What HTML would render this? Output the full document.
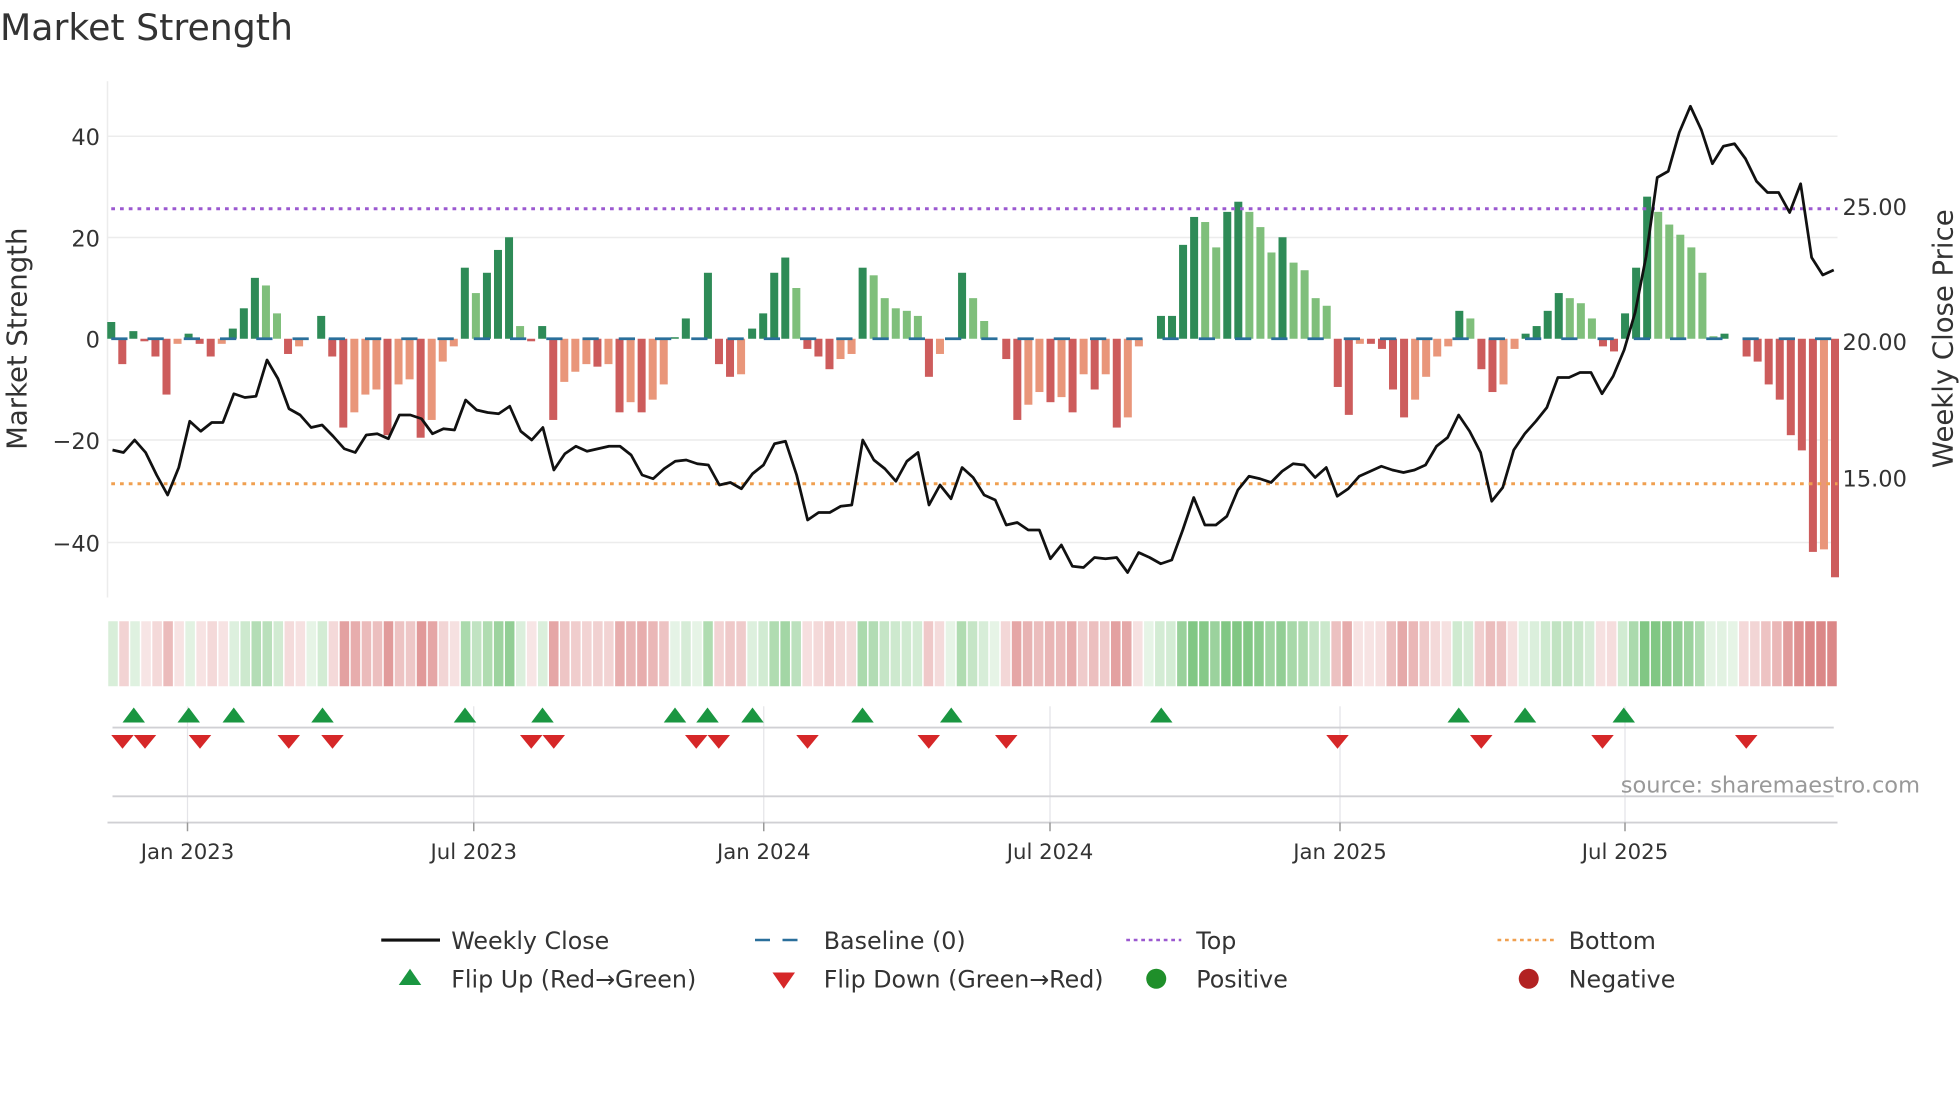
<!DOCTYPE html>
<html><head><meta charset="utf-8"><style>
html,body{margin:0;padding:0;background:#fff;}
svg{display:block;}
text{font-family:"DejaVu Sans","Liberation Sans",sans-serif;fill:#333;}
</style></head><body>
<svg id="s" width="1960" height="1102" viewBox="0 0 1568 881.6" xmlns="http://www.w3.org/2000/svg">
<rect width="1568" height="882" fill="#fff"/>
<text x="0" y="32" font-size="29" fill="#333">Market Strength</text>
<g stroke="#ececec" stroke-width="1.2">
<line x1="86" x2="1470" y1="109" y2="109"/><line x1="86" x2="1470" y1="190" y2="190"/>
<line x1="86" x2="1470" y1="352" y2="352"/><line x1="86" x2="1470" y1="434" y2="434"/>
</g>
<line x1="86" x2="86" y1="65" y2="478" stroke="#ececec" stroke-width="1.2"/>
<g font-size="18" text-anchor="end">
<text x="80" y="116">40</text><text x="80" y="197">20</text><text x="80" y="278">0</text>
<text x="80" y="359">−20</text><text x="80" y="441">−40</text>
</g>
<g font-size="18">
<text x="1474" y="172">25.00</text><text x="1474" y="280">20.00</text><text x="1474" y="389">15.00</text>
</g>
<text transform="translate(21,271) rotate(-90)" font-size="22" text-anchor="middle">Market Strength</text>
<text transform="translate(1562,271) rotate(-90)" font-size="22" text-anchor="middle">Weekly Close Price</text>
<g id="bars"></g>
<line x1="89" x2="1470" y1="271" y2="271" stroke="#2a6f9b" stroke-width="2.2" stroke-dasharray="13 16"/>
<line x1="89" x2="1470" y1="167" y2="167" stroke="#9b59d0" stroke-width="2.4" stroke-dasharray="3 4"/>
<line x1="89" x2="1470" y1="387" y2="387" stroke="#f0a050" stroke-width="2.4" stroke-dasharray="3 4"/>
<polyline id="price" fill="none" stroke="#111" stroke-width="2.2" stroke-linejoin="round"/>
<g id="strip"></g>
<g stroke="#e4e4e8" stroke-width="1">
<line x1="150" x2="150" y1="565" y2="658"/><line x1="379" x2="379" y1="565" y2="658"/>
<line x1="611" x2="611" y1="565" y2="658"/><line x1="840" x2="840" y1="565" y2="658"/>
<line x1="1072" x2="1072" y1="565" y2="658"/><line x1="1300" x2="1300" y1="565" y2="658"/>
</g>
<line x1="90" x2="1467" y1="582" y2="582" stroke="#d0d0d4" stroke-width="1.5"/>
<line x1="90" x2="1467" y1="637" y2="637" stroke="#d0d0d4" stroke-width="1.5"/>
<line x1="86" x2="1470" y1="658" y2="658" stroke="#d0d0d4" stroke-width="1.5"/>
<g stroke="#999" stroke-width="1.2">
<line x1="150" x2="150" y1="658" y2="665"/><line x1="379" x2="379" y1="658" y2="665"/>
<line x1="611" x2="611" y1="658" y2="665"/><line x1="840" x2="840" y1="658" y2="665"/>
<line x1="1072" x2="1072" y1="658" y2="665"/><line x1="1300" x2="1300" y1="658" y2="665"/>
</g>
<g id="marks"></g>
<text x="1536" y="634" font-size="18" text-anchor="end" style="fill:#999">source: sharemaestro.com</text>
<g font-size="17" text-anchor="middle">
<text x="150" y="687">Jan 2023</text><text x="379" y="687">Jul 2023</text><text x="611" y="687">Jan 2024</text>
<text x="840" y="687">Jul 2024</text><text x="1072" y="687">Jan 2025</text><text x="1300" y="687">Jul 2025</text>
</g>
<g font-size="19">
<line x1="305" x2="352" y1="752" y2="752" stroke="#111" stroke-width="2.5"/>
<text x="361" y="759">Weekly Close</text>
<line x1="604" x2="646" y1="752" y2="752" stroke="#2a6f9b" stroke-width="2" stroke-dasharray="12 10"/>
<text x="659" y="759">Baseline (0)</text>
<line x1="901" x2="945" y1="752" y2="752" stroke="#9b59d0" stroke-width="2" stroke-dasharray="3 3"/>
<text x="957" y="759">Top</text>
<line x1="1198" x2="1243" y1="752" y2="752" stroke="#f0a050" stroke-width="2" stroke-dasharray="3 3"/>
<text x="1255" y="759">Bottom</text>
<polygon points="319,788 337,788 328,775" fill="#1a9641"/>
<text x="361" y="790">Flip Up (Red→Green)</text>
<polygon points="618,778 636,778 627,791" fill="#d62728"/>
<text x="659" y="790">Flip Down (Green→Red)</text>
<circle cx="925" cy="783" r="8" fill="#1f8f2a"/>
<text x="957" y="790">Positive</text>
<circle cx="1223" cy="783" r="8" fill="#b22222"/>
<text x="1255" y="790">Negative</text>
</g>
</svg>
<script>
var v=[3.3,-5,1.5,-0.5,-3.5,-11,-1,1,-1,-3.5,-1,2,6,12,10.5,5,-3,-1.5,0,4.5,-3.5,-17.5,-14.5,-11,-10,-19,-9,-8,-19.5,-16,-4.5,-1.5,14,9,13,17.5,20,2.5,-0.5,2.5,-16,-8.5,-6.5,-5,-5.5,-5,-14.5,-12.5,-14.5,-12,-9,0.3,4,0,13,-5,-7.5,-7,2,5,13,16,10,-2,-3.5,-6,-4,-3,14,12.5,8,6,5.5,4.5,-7.5,-3,0,13,8,3.5,0,
-4,-16,-13,-10.5,-12.5,-11.5,-14.5,-7,-10,-7,-17.5,-15.5,-1.5,0,4.5,4.5,18.5,24,23,18,25,27,25,22,17,20,15,13.5,8,6.5,
-9.5,-15,-1,-1,-2,-10,-15.5,-12,-7.5,-3.5,-1.5,5.5,4,-6,-10.5,-9,-2,1,2.5,5.5,9,8,7,4,-1.5,-2.5,5,14,28,25,22.5,20.5,18,13,0.5,1,0,-3.5,-4.5,-9,-12,-19,-22,-42,-41.5,-47];
var NS="http://www.w3.org/2000/svg",n=v.length,st=(1468-89)/(n-1);
function el(t,a,p){var e=document.createElementNS(NS,t);for(var k in a)e.setAttribute(k,a[k]);p.appendChild(e);}
var B=document.getElementById('bars'),S=document.getElementById('strip'),M=document.getElementById('marks');
for(var i=0;i<n;i++){var x=89+i*st,y=v[i],h=Math.abs(y)*4.06;var p=i>0?v[i-1]:0;
var c=y>=0?(y>=p?'#2e8b57':'#7fbf7b'):(y<=p?'#cd5c5c':'#e9967a');
if(h>0.5)el('rect',{x:x-3.2,y:y>=0?271-h:271,width:6.4,height:h,fill:c},B);
var a=Math.min(1,0.2+Math.abs(y)/30);
var sc=y>=0?'rgba(76,175,80,'+(a*0.7)+')':'rgba(200,70,70,'+(a*0.65)+')';
el('rect',{x:86+i*(1384/n)+0.6,y:497,width:1384/n-1.2,height:52,fill:sc},S);}
var py=[360,362,352,362,380,396,374,337,345,338,338,315,318,317,288,303,327,332,342,340,349,359,362,348,347,351,332,332,335,347,343,344,320,328,330,331,325,345,352,342,376,363,357,361,359,357,357,364,380,383,375,369,368,371,372,388,386,391,379,372,355,353,380,416,410,410,405,404,352,368,375,385,369,362,404,388,399,374,382,396,400,420,418,424,424,447,436,453,454,446,447,446,458,442,446,451,448,424,398,420,420,413,392,381,383,386,377,371,372,382,374,397,391,381,377,373,376,378,376,372,357,350,332,345,362,401,390,360,347,337,326,302,302,298,298,315,301,280,250,205,142,137,106,85,104,131,117,115,127,145,154,154,170,147,206,220,216];
var pts=[];for(var i=0;i<py.length;i++)pts.push((90+i*(1377/(py.length-1))).toFixed(1)+','+py[i]);
document.getElementById('price').setAttribute('points',pts.join(' '));
[107,151,187,258,372,434,540,566,602,690,761,929,1167,1220,1299].forEach(function(x){el('polygon',{points:(x-9)+',578 '+(x+9)+',578 '+x+',566',fill:'#1a9641'},M);});
[98,116,160,231,266,425,443,557,575,646,743,805,1070,1185,1282,1397].forEach(function(x){el('polygon',{points:(x-9)+',588 '+(x+9)+',588 '+x+',599',fill:'#d62728'},M);});
</script>
</body></html>
